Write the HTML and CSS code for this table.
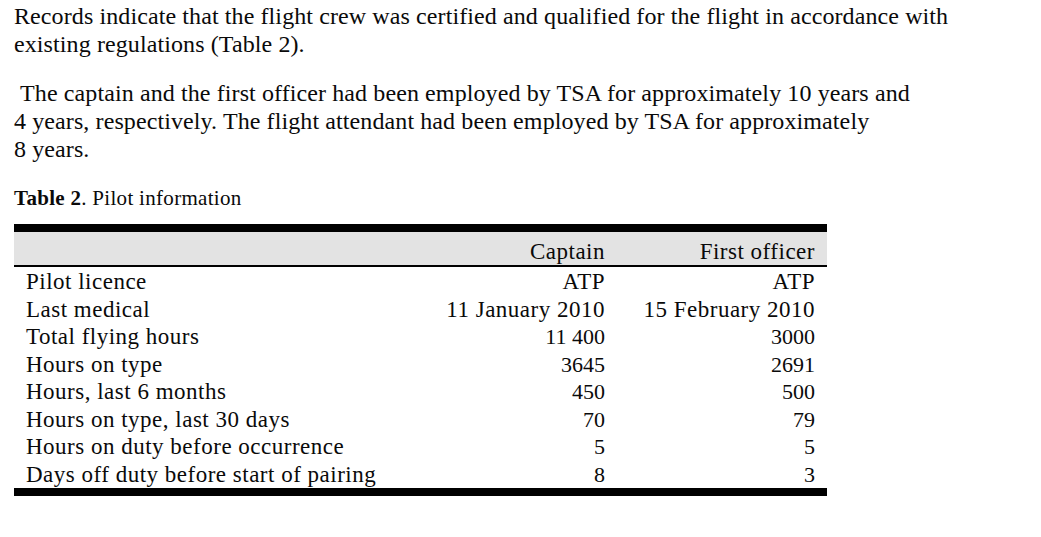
FILE: index.html
```html
<!DOCTYPE html>
<html lang="en">
<head>
<meta charset="utf-8">
<title>Pilot information</title>
<link rel="stylesheet" href="styles.css">
</head>
<body>
<main class="page">
  <p class="para para-first">
    <span class="line">Records indicate that the flight crew was certified and qualified for the flight in accordance with</span>
    <span class="line">existing regulations (Table 2).</span>
  </p>
  <p class="para para-second">
    <span class="line">&nbsp;The captain and the first officer had been employed by TSA for approximately 10 years and</span>
    <span class="line">4 years, respectively. The flight attendant had been employed by TSA for approximately</span>
    <span class="line">8 years.</span>
  </p>
  <p class="caption"><strong>Table 2</strong>. Pilot information</p>
  <table class="pilots">
    <thead>
      <tr>
        <th class="label"></th>
        <th class="val">Captain</th>
        <th class="val">First officer</th>
      </tr>
    </thead>
    <tbody>
      <tr class="first"><td class="label">Pilot licence</td><td class="val">ATP</td><td class="val">ATP</td></tr>
      <tr><td class="label">Last medical</td><td class="val">11 January 2010</td><td class="val">15 February 2010</td></tr>
      <tr><td class="label">Total flying hours</td><td class="val"><span class="num">11 400</span></td><td class="val"><span class="num">3000</span></td></tr>
      <tr><td class="label">Hours on type</td><td class="val"><span class="num">3645</span></td><td class="val"><span class="num">2691</span></td></tr>
      <tr><td class="label">Hours, last 6 months</td><td class="val"><span class="num">450</span></td><td class="val"><span class="num">500</span></td></tr>
      <tr><td class="label">Hours on type, last 30 days</td><td class="val"><span class="num">70</span></td><td class="val"><span class="num">79</span></td></tr>
      <tr><td class="label">Hours on duty before occurrence</td><td class="val"><span class="num">5</span></td><td class="val"><span class="num">5</span></td></tr>
      <tr class="last"><td class="label">Days off duty before start of pairing</td><td class="val"><span class="num">8</span></td><td class="val"><span class="num">3</span></td></tr>
    </tbody>
  </table>
</main>
</body>
</html>
```
FILE: styles.css
```css
html, body {
  margin: 0;
  padding: 0;
  background: #ffffff;
}

body {
  font-family: "Liberation Serif", "Times New Roman", serif;
  color: #0a0a0a;
}

.page {
  padding: 2px 0 0 14px;
}

.para {
  margin: 0;
  font-size: 24px;
  line-height: 28px;
  letter-spacing: 0.1px;
}

.line {
  display: block;
  white-space: nowrap;
}

.para-second {
  margin-top: 21px;
}

.caption {
  margin: 23px 0 0 0;
  font-size: 21px;
  line-height: 24px;
  letter-spacing: 0.3px;
}

.caption strong {
  font-weight: bold;
}

.pilots {
  margin-top: 14px;
  width: 813px;
  border-collapse: collapse;
  table-layout: fixed;
  font-size: 23px;
  letter-spacing: 0.5px;
}

.pilots thead tr {
  background: #e3e3e3;
  border-top: 8px solid #000;
  border-bottom: 2px solid #000;
}

.pilots th {
  font-weight: normal;
  height: 27px;
  line-height: 27px;
  padding: 6px 12px 0 12px;
  vertical-align: top;
}

.pilots td {
  height: 27.5px;
  line-height: 27px;
  padding: 0 12px;
  white-space: nowrap;
}

.pilots th.label,
.pilots td.label {
  width: 369px;
  text-align: left;
}

.pilots th.val,
.pilots td.val {
  width: 186px;
  text-align: right;
}

.pilots .num {
  font-size: 22px;
  letter-spacing: 0;
}

.pilots tbody tr.first td {
  padding-top: 1px;
}

.pilots tbody tr.last {
  border-bottom: 8px solid #000;
}
```
